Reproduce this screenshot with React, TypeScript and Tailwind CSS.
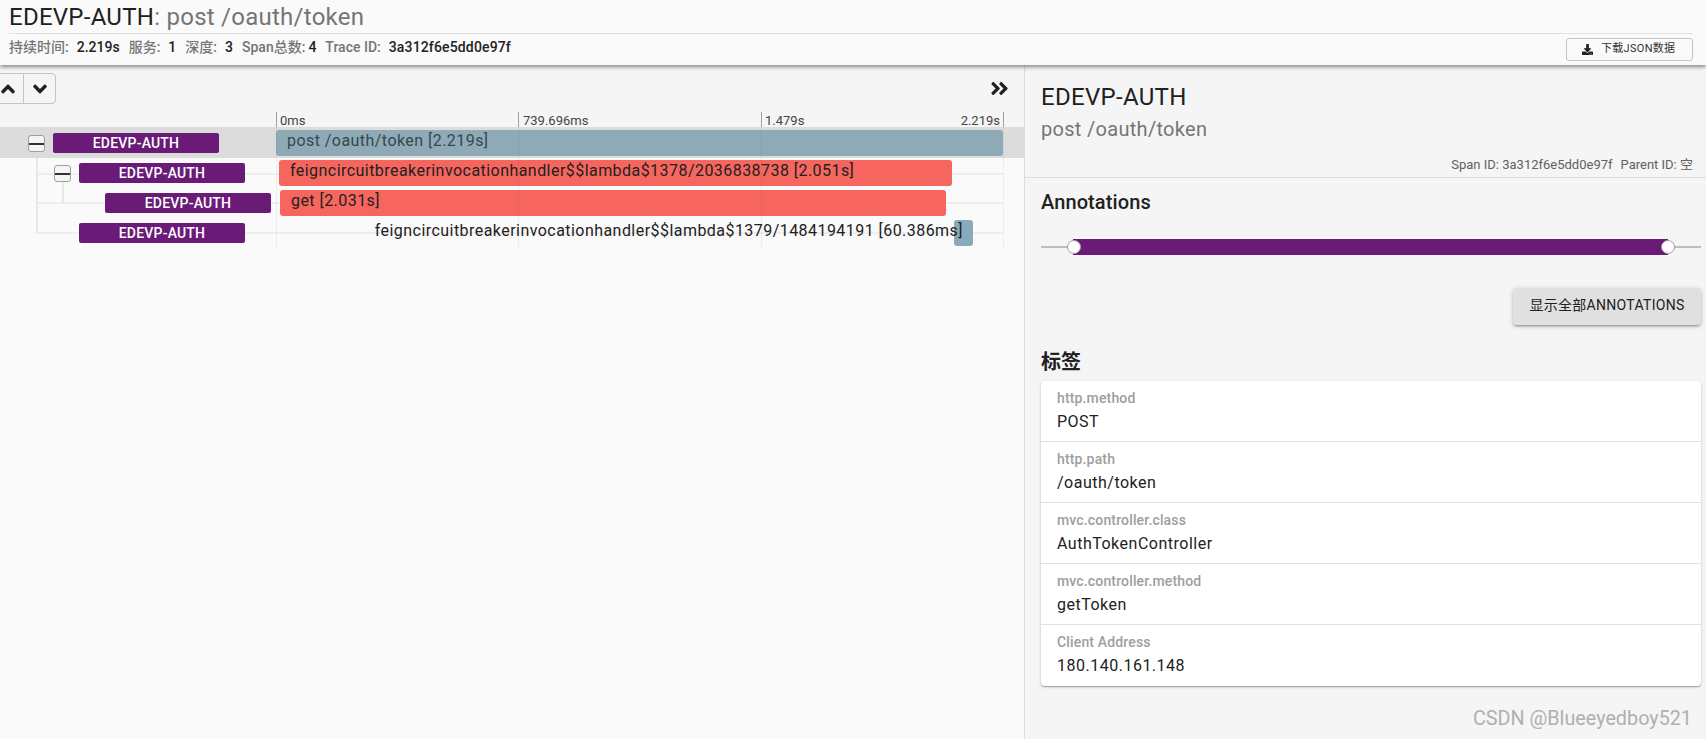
import { FaAngleDoubleRight, FaAngleDown, FaAngleUp, FaDownload } from "react-icons/fa"

const spans = [
  { indent: 53, name: "post /oauth/token [2.219s]", left: 276, width: 727, bar: "bg-[#8eaab6]", text: "text-[#37474f]", toggle: true, selected: true, line: 143 },
  { indent: 79, name: "feigncircuitbreakerinvocationhandler$$lambda$1378/2036838738 [2.051s]", left: 279, width: 673, bar: "bg-[#f6665e]", text: "text-[#212121]", toggle: true, selected: false, line: 173 },
  { indent: 105, name: "get [2.031s]", left: 280, width: 666, bar: "bg-[#f6665e]", text: "text-[#212121]", toggle: false, selected: false, line: 202 },
  { indent: 79, name: "feigncircuitbreakerinvocationhandler$$lambda$1379/1484194191 [60.386ms]", left: 954, width: 19, bar: "bg-[#88abbc]", text: "text-[#212121]", toggle: false, selected: false, line: 232 },
]

const stats = [
  ["持续时间:", "2.219s"],
  ["服务:", "1"],
  ["深度:", "3"],
  ["Span总数:", "4"],
  ["Trace ID:", "3a312f6e5dd0e97f"],
]

const tags = [
  ["http.method", "POST"],
  ["http.path", "/oauth/token"],
  ["mvc.controller.class", "AuthTokenController"],
  ["mvc.controller.method", "getToken"],
  ["Client Address", "180.140.161.148"],
]

function Toggle() {
  return (
    <div className="flex h-[17px] w-[17px] items-center rounded-[3px] border border-[#9e9e9e] bg-[#f5f5f5]">
      <div className="h-[2px] w-full bg-[#333]" />
    </div>
  )
}

function SpanRow({ span }: { span: (typeof spans)[number] }) {
  const inBar = span.width > 100
  return (
    <div className={`relative flex h-[30px] ${span.selected ? "bg-[#dcdcdc] h-[31px] -mb-[1px]" : ""}`}>
      <div className="relative flex w-[276px] shrink-0 items-start pt-[6px]" style={{ paddingLeft: span.indent }}>
        {span.toggle && (
          <div className="absolute top-[8px]" style={{ left: span.indent - 25 }}>
            <Toggle />
          </div>
        )}
        <div className="relative flex h-[20px] w-[166px] items-center justify-center rounded-[2px] bg-[#6a1b77] text-[14px] font-medium tracking-[0.2px] text-white">
          EDEVP-AUTH
        </div>
      </div>
      <div className="relative flex-1 pt-[3px]">
        <div
          className={`relative h-[26px] rounded-[3px] ${span.bar}`}
          style={{ marginLeft: span.left - 276, width: span.width }}
        >
          {inBar && (
            <span className={`absolute left-[11px] top-[1px] whitespace-nowrap text-[16px] leading-[19px] tracking-[0.45px] ${span.text}`}>
              {span.name}
            </span>
          )}
        </div>
        {!inBar && (
          <span className={`absolute right-[61px] top-[4px] whitespace-nowrap text-[16px] leading-[19px] tracking-[0.45px] ${span.text}`}>
            {span.name}
          </span>
        )}
      </div>
    </div>
  )
}

export default function App() {
  return (
    <div className="flex h-[739px] w-[1706px] flex-col overflow-hidden bg-[#fafafa] font-[Roboto,'Noto_Sans_CJK_SC',sans-serif] text-[#212121]">
      <header className="relative z-10 h-[65px] shrink-0 bg-[#fafafa] px-[9px] shadow-[0_2px_4px_rgba(0,0,0,0.45)] pr-[13px]">
        <div className="h-[34px] border-b border-[#e0e0e0] pt-[2px] text-[24px] leading-[30px] tracking-[0.26px]">
          EDEVP-AUTH<span className="text-[#757575]">: post /oauth/token</span>
        </div>
        <div className="flex h-[31px] items-center justify-between">
          <div className="-mt-[5px] flex gap-[9px] text-[14px] font-medium">
            {stats.map(([label, value], i) => (
              <div key={label} className={`flex ${i === 3 ? "gap-[3px]" : "gap-[8px]"}`}>
                <span className="text-[#757575]">{label}</span>
                <span className={`text-[#212121] ${i === 4 ? "tracking-[0.15px]" : ""}`}>{value}</span>
              </div>
            ))}
          </div>
          <button className="flex h-[23px] w-[127px] items-center gap-[8px] rounded-[3px] border border-[#c4c4c4] bg-[#fafafa] pl-[15px] text-[11px] tracking-[0.3px] text-[#333]">
            <FaDownload className="h-[11px] w-[11px] text-[#212121]" />
            下载JSON数据
          </button>
        </div>
      </header>

      <div className="flex flex-1">
        <div className="relative w-[1024px] shrink-0">
          <div className="flex h-[47px] items-start justify-between bg-[#f5f5f5] pt-[8px] pr-[14px]">
            <div className="-ml-[8px] flex h-[31px] rounded-[4px] border border-[#c4c4c4]">
              <div className="flex w-[31px] items-center justify-center border-r border-[#c4c4c4]">
                <FaAngleUp className="h-[22px] w-[22px] text-[#212121]" />
              </div>
              <div className="flex w-[31px] items-center justify-center">
                <FaAngleDown className="h-[22px] w-[22px] text-[#212121]" />
              </div>
            </div>
            <FaAngleDoubleRight className="mt-[5px] h-[21px] w-[21px] text-[#212121]" />
          </div>

          <div className="flex h-[15px] bg-[#f5f5f5] pl-[276px] pr-[20px] text-[13px] leading-[17px] text-[#444]">
            <div className="w-[242px] border-l border-[#9e9e9e] pl-[3px]">0ms</div>
            <div className="w-[243px] border-l border-[#9e9e9e] pl-[4px]">739.696ms</div>
            <div className="flex flex-1 justify-between border-x border-[#9e9e9e] pl-[3px] pr-[3px]">
              <span>1.479s</span>
              <span>2.219s</span>
            </div>
          </div>

          <div className="relative">
            {spans.map((span) => (
              <div key={span.line} className="absolute left-[36px] right-[21px] h-[2px] bg-[#eeeeee]" style={{ top: span.line - 127 }} />
            ))}
            <div className="absolute left-[36px] top-[25px] h-[81px] w-[2px] bg-[#e8e8e8]" />
            <div className="absolute left-[62px] top-[55px] h-[22px] w-[2px] bg-[#e8e8e8]" />
            {spans.map((span) => (
              <SpanRow key={span.line} span={span} />
            ))}
            <div className="pointer-events-none absolute inset-x-0 top-0 h-[121px]">
              <div className="absolute left-[276px] h-full w-[1px] bg-black/[0.05]" />
              <div className="absolute left-[518px] h-full w-[1px] bg-black/[0.05]" />
              <div className="absolute left-[761px] h-full w-[1px] bg-black/[0.05]" />
              <div className="absolute left-[1003px] h-full w-[1px] bg-black/[0.05]" />
            </div>
          </div>
        </div>

        <aside className="relative flex-1 border-l border-[#dcdcdc] bg-[#f5f5f5]">
          <div className="h-[113px] border-b border-[#dcdcdc] pr-[13px]">
            <div className="pl-[16px] pt-[16px] text-[24px] leading-[32px] tracking-[0.3px]">EDEVP-AUTH</div>
            <div className="pl-[16px] pt-[2px] text-[20px] leading-[28px] tracking-[0.3px] text-[#757575]">post /oauth/token</div>
            <div className="flex justify-end gap-[8px] pt-[14px] text-[13px] leading-[16px] text-[#616161]">
              <span>Span ID: 3a312f6e5dd0e97f</span>
              <span>Parent ID: 空</span>
            </div>
          </div>

          <div className="pl-[16px] pr-[5px]">
            <h2 className="pt-[11px] text-[20px] font-medium leading-[26px] tracking-[0.1px] text-[#212121]">Annotations</h2>
            <div className="relative mt-[24px] flex h-[16px] items-center">
              <div className="h-[2px] w-full bg-[#bdbdbd]" />
              <div className="absolute left-[32px] right-[33px] h-[16px] bg-[#6a1b77]" />
              <div className="absolute left-[26px] h-[14px] w-[14px] rounded-full border border-[#9e9e9e] bg-white" />
              <div className="absolute right-[26px] h-[14px] w-[14px] rounded-full border border-[#9e9e9e] bg-white" />
            </div>
            <div className="mt-[33px] flex justify-end">
              <button className="h-[37px] w-[188px] rounded-[4px] bg-[#e0e0e0] pb-[2px] text-[14px] tracking-[0.3px] text-[#212121] shadow-[0_1px_5px_rgba(0,0,0,0.2),0_2px_2px_rgba(0,0,0,0.14),0_3px_1px_-2px_rgba(0,0,0,0.12)]">
                显示全部ANNOTATIONS
              </button>
            </div>
            <h2 className="mt-[23px] text-[20px] font-bold leading-[28px] text-[#212121]">标签</h2>
            <div className="mt-[5px] overflow-hidden rounded-[4px] bg-white shadow-[0_1px_3px_rgba(0,0,0,0.2),0_1px_1px_rgba(0,0,0,0.14),0_2px_1px_-1px_rgba(0,0,0,0.12)]">
              {tags.map(([label, value], i) => (
                <div key={label} className={`h-[61px] px-[16px] pt-[8px] ${i < tags.length - 1 ? "border-b border-[#e0e0e0]" : ""}`}>
                  <div className="text-[14px] font-medium leading-[18px] tracking-[0.15px] text-[#9e9e9e]">{label}</div>
                  <div className="pt-[3px] text-[16px] leading-[24px] tracking-[0.5px] text-[#212121]">{value}</div>
                </div>
              ))}
            </div>
          </div>

          <div className="absolute bottom-[9px] right-[14px] text-[19.8px] leading-[22px] text-[#b0b0b0]">CSDN @Blueeyedboy521</div>
        </aside>
      </div>
    </div>
  )
}
